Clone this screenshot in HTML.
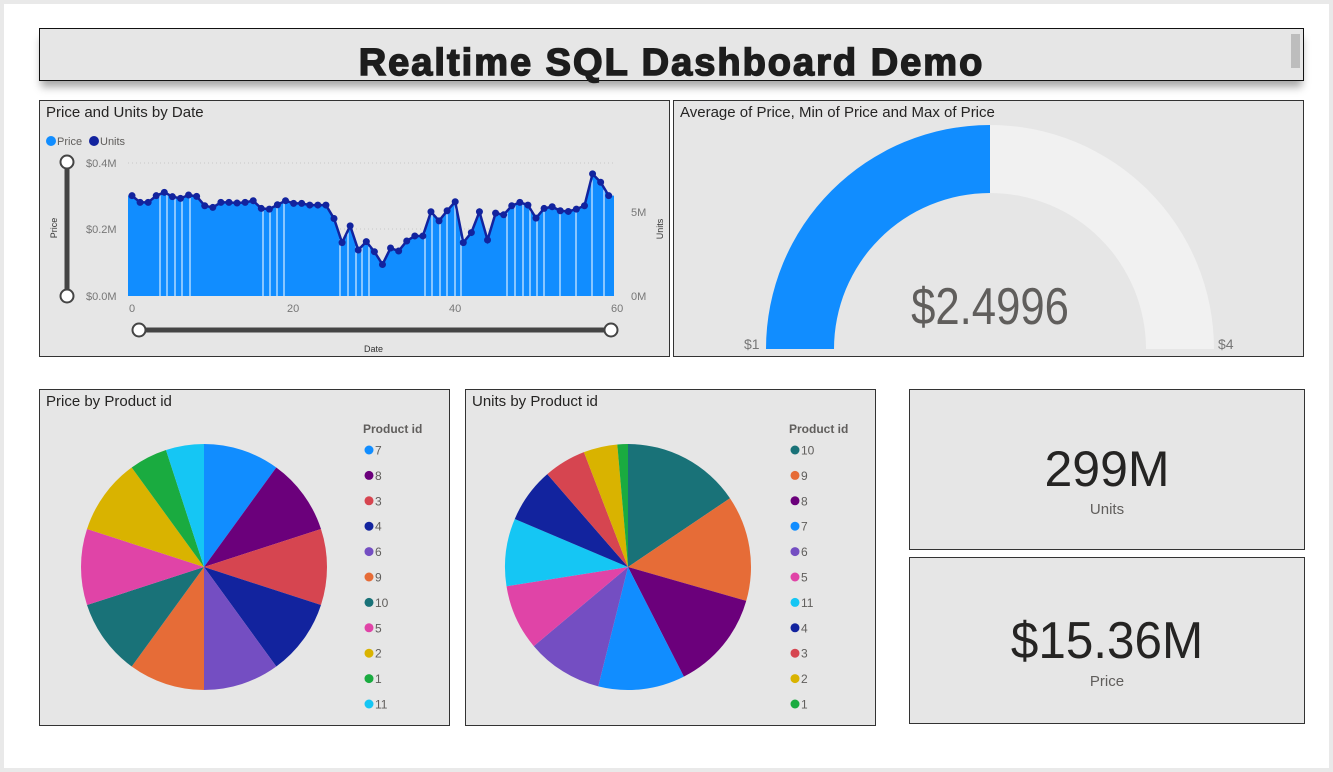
<!DOCTYPE html>
<html><head><meta charset="utf-8"><style>
body{margin:0;width:1333px;height:772px;background:#e9e9e9;font-family:"Liberation Sans",sans-serif;overflow:hidden;position:relative}
.page{position:absolute;left:4px;top:4px;width:1325px;height:764px;background:#fff}
.box{position:absolute;background:#e6e6e6;border:1px solid #333;box-sizing:border-box}
.ttl{position:absolute;left:6px;top:3px;font-size:15px;color:#252423}
svg{position:absolute;left:0;top:0}
</style></head><body>
<div class="page"></div>
<div class="box" style="left:39px;top:28px;width:1265px;height:53px;box-shadow:0 8px 8px -2px rgba(0,0,0,0.35);border:1.5px solid #111">
 <div style="position:absolute;left:0;right:0;top:12px;text-align:center;font-size:38px;font-weight:bold;color:#1d1d1d;letter-spacing:2px;-webkit-text-stroke:1.5px #1d1d1d;line-height:44px">Realtime SQL Dashboard Demo</div>
 <div style="position:absolute;left:1251px;top:5px;width:9px;height:34px;background:#bdbdbd"></div>
</div>
<div class="box" style="left:39px;top:100px;width:631px;height:257px"><div class="ttl">Price and Units by Date</div></div>
<div class="box" style="left:673px;top:100px;width:631px;height:257px"><div class="ttl">Average of Price, Min of Price and Max of Price</div></div>
<div class="box" style="left:39px;top:389px;width:411px;height:337px"><div class="ttl">Price by Product id</div></div>
<div class="box" style="left:465px;top:389px;width:411px;height:337px"><div class="ttl">Units by Product id</div></div>
<div class="box" style="left:909px;top:389px;width:396px;height:161px">
 <div style="position:absolute;left:0;right:0;top:50px;text-align:center;font-size:50px;color:#252423">299M</div>
 <div style="position:absolute;left:0;right:0;top:111px;text-align:center;font-size:15px;color:#605e5c">Units</div></div>
<div class="box" style="left:909px;top:557px;width:396px;height:167px">
 <div style="position:absolute;left:0;right:0;top:53px;text-align:center;font-size:52px;color:#252423;transform:scaleX(0.95)">$15.36M</div>
 <div style="position:absolute;left:0;right:0;top:115px;text-align:center;font-size:15px;color:#605e5c">Price</div></div>
<svg id="s" width="1333" height="772" font-family="Liberation Sans, sans-serif"></svg>
<script>
var s='';
var zy=[300,320,320,300,290,303,308,298,302,330,335,320,320,322,320,315,338,340,327,315,323,323,328,328,328,368,440,390,462,437,467,505,456,465,435,420,420,348,375,345,318,440,410,348,432,352,357,330,320,328,367,338,333,345,347,340,330,235,260,300];
var pts=zy.map(function(v,i){return [132+8.08*i,95+v/2.98]});
s+='<line x1="128" y1="163" x2="614" y2="163" stroke="#c8c8c8" stroke-dasharray="1 3"/><line x1="128" y1="229" x2="614" y2="229" stroke="#c8c8c8" stroke-dasharray="1 3"/>';
var poly='128,296 128,'+pts[0][1]+' '+pts.map(function(p){return p[0]+','+p[1]}).join(' ')+' 614,'+pts[59][1]+' 614,296';
s+='<defs><clipPath id="ar"><polygon points="'+poly+'"/></clipPath></defs>';
s+='<polygon points="'+poly+'" fill="#118dff"/><g clip-path="url(#ar)">';
[160,167,175,182,190,263,270,277,284,340,348,356,362,369,425,432,440,447,455,461,507,515,523,530,537,544,560,576,592,604].forEach(function(x){s+='<line x1="'+x+'" y1="150" x2="'+x+'" y2="296" stroke="#fff" stroke-width="1"/>'});
s+='</g><polyline points="'+pts.map(function(p){return p[0]+','+p[1]}).join(' ')+'" fill="none" stroke="#12239e" stroke-width="2.5"/>';
pts.forEach(function(p){s+='<circle cx="'+p[0]+'" cy="'+p[1]+'" r="3.5" fill="#12239e"/>'});
s+='<circle cx="51" cy="141" r="5" fill="#118dff"/><text x="57" y="145" font-size="11" fill="#605e5c">Price</text><circle cx="94" cy="141" r="5" fill="#12239e"/><text x="100" y="145" font-size="11" fill="#605e5c">Units</text>';
s+='<g font-size="11" fill="#777"><text x="86" y="167">$0.4M</text><text x="86" y="233">$0.2M</text><text x="86" y="300">$0.0M</text><text x="631" y="216">5M</text><text x="631" y="300">0M</text><text x="129" y="312">0</text><text x="287" y="312">20</text><text x="449" y="312">40</text><text x="611" y="312">60</text></g>';
s+='<text x="57" y="228" text-anchor="middle" font-size="9" fill="#333" transform="rotate(-90 57 228)">Price</text><text x="663" y="229" text-anchor="middle" font-size="9" fill="#333" transform="rotate(-90 663 229)">Units</text><text x="364" y="352" font-size="9" fill="#333">Date</text>';
s+='<line x1="67" y1="162" x2="67" y2="296" stroke="#444" stroke-width="5"/><circle cx="67" cy="162" r="6.5" fill="#fff" stroke="#444" stroke-width="2"/><circle cx="67" cy="296" r="6.5" fill="#fff" stroke="#444" stroke-width="2"/>';
s+='<line x1="139" y1="330" x2="611" y2="330" stroke="#444" stroke-width="5"/><circle cx="139" cy="330" r="6.5" fill="#fff" stroke="#444" stroke-width="2"/><circle cx="611" cy="330" r="6.5" fill="#fff" stroke="#444" stroke-width="2"/>';
var cx=990,cy=349,R=224,r=156;
s+='<path d="M'+(cx-R)+' '+cy+' A'+R+' '+R+' 0 0 1 '+cx+' '+(cy-R)+' L'+cx+' '+(cy-r)+' A'+r+' '+r+' 0 0 0 '+(cx-r)+' '+cy+'Z" fill="#118dff"/>';
s+='<path d="M'+cx+' '+(cy-R)+' A'+R+' '+R+' 0 0 1 '+(cx+R)+' '+cy+' L'+(cx+r)+' '+cy+' A'+r+' '+r+' 0 0 0 '+cx+' '+(cy-r)+'Z" fill="#f1f1f1"/>';
s+='<text x="0" y="0" text-anchor="middle" font-size="52" fill="#605e5c" transform="translate(990 324) scale(0.84 1)">$2.4996</text><text x="744" y="349" font-size="14" fill="#777">$1</text><text x="1218" y="349" font-size="14" fill="#777">$4</text>';
function pie(cx,cy,R,sl){var a=0;sl.forEach(function(q){var b=q[0];var p1=[cx+R*Math.sin(a*Math.PI/180),cy-R*Math.cos(a*Math.PI/180)],p2=[cx+R*Math.sin(b*Math.PI/180),cy-R*Math.cos(b*Math.PI/180)];s+='<path d="M'+cx+' '+cy+' L'+p1[0]+' '+p1[1]+' A'+R+' '+R+' 0 '+((b-a)>180?1:0)+' 1 '+p2[0]+' '+p2[1]+'Z" fill="'+q[1]+'"/>';a=b;});}
var C={7:'#118dff',8:'#6b007b',3:'#d64550',4:'#12239e',6:'#744ec2',9:'#e66c37',10:'#197278',5:'#e044a7',2:'#d9b300',1:'#1aab40',11:'#15c6f4'};
pie(204,567,123,[[36,C[7]],[72,C[8]],[108,C[3]],[144,C[4]],[180,C[6]],[216,C[9]],[252,C[10]],[288,C[5]],[324,C[2]],[342,C[1]],[360,C[11]]]);
pie(628,567,123,[[56,C[10]],[106,C[9]],[153,C[8]],[194,C[7]],[230,C[6]],[261,C[5]],[293,C[11]],[319,C[4]],[339,C[3]],[355,C[2]],[360,C[1]]]);
function leg(x,ids){s+='<text x="'+x+'" y="433" font-size="12" font-weight="bold" fill="#605e5c">Product id</text>';ids.forEach(function(id,i){var y=450+i*25.4;s+='<circle cx="'+(x+6)+'" cy="'+y+'" r="4.5" fill="'+C[id]+'"/><text x="'+(x+12)+'" y="'+(y+4.5)+'" font-size="12" fill="#605e5c">'+id+'</text>'});}
leg(363,[7,8,3,4,6,9,10,5,2,1,11]);
leg(789,[10,9,8,7,6,5,11,4,3,2,1]);
document.getElementById('s').innerHTML=s;
</script>
</body></html>
